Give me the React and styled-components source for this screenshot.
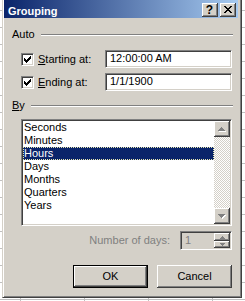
import React from "react";
import styled, { createGlobalStyle } from "styled-components";

const GlobalStyle = createGlobalStyle`
  html, body {
    margin: 0;
    padding: 0;
  }
  body {
    width: 245px;
    height: 301px;
    overflow: hidden;
    background-color: #fff;
    background-image:
      linear-gradient(to right, #c0c0c0 1px, transparent 1px),
      linear-gradient(to bottom, #c0c0c0 1px, transparent 1px);
    background-size: 64px 17px;
    background-position: 20px 10px;
    font-family: "Liberation Sans", Arial, sans-serif;
    font-size: 11px;
  }
  #root {
    display: flow-root;
  }
`;

const FACE = "#d4d0c8";

// classic 3d edges
const raised = `
  box-shadow: inset -1px -1px #404040, inset 1px 1px #fff,
    inset -2px -2px #808080, inset 2px 2px ${FACE};
`;
const sunken = `
  border: 1px solid;
  border-color: #808080 #fff #fff #808080;
  box-shadow: inset 1px 1px #404040, inset -1px -1px ${FACE};
`;

const Window = styled.div`
  margin: -3px 0 0 2px;
  width: 240px;
  height: 301px;
  box-sizing: border-box;
  background: ${FACE};
  border: 1px solid;
  border-color: ${FACE} #404040 #404040 ${FACE};
  box-shadow: inset 1px 1px #fff, inset -1px -1px #808080;
  padding: 2px 3px 2px 1px;
  display: flex;
  flex-direction: column;
`;

const TitleBar = styled.div`
  height: 18px;
  display: flex;
  align-items: flex-start;
  padding: 0 2px 0 4px;
  background: linear-gradient(to right, #0a246a, #a6caf0);
`;

const TitleText = styled.div`
  flex: 1;
  padding-top: 5px;
  line-height: 13px;
  font-weight: bold;
  color: #fff;
`;

const CaptionButtons = styled.div`
  display: flex;
  gap: 2px;
  margin-top: 3px;
`;

const CaptionButton = styled.div`
  width: 16px;
  height: 14px;
  box-sizing: border-box;
  background: ${FACE};
  ${raised}
  display: flex;
  align-items: center;
  justify-content: center;
  font-weight: bold;
  font-size: 12px;
  line-height: 14px;
  color: #000;
  padding: 0 1px 1px 0;
`;

const Body = styled.div`
  flex: 1;
  display: flex;
  flex-direction: column;
  padding: 10px 6px 0 8px;
`;

const GroupHeader = styled.div`
  display: flex;
  align-items: center;
  gap: 6px;
  height: 13px;
  line-height: 13px;
  margin-top: ${(p) => p.$top || 0}px;
`;

const Etched = styled.div`
  flex: 1;
  height: 0;
  border-top: 1px solid #808080;
  border-bottom: 1px solid #fff;
  margin-right: -1px;
`;

const FieldRow = styled.div`
  display: flex;
  align-items: center;
  height: 18px;
  margin: ${(p) => p.$top}px 0 0 9px;
`;

const CheckBox = styled.span`
  width: 13px;
  height: 13px;
  box-sizing: border-box;
  background: #fff;
  ${sunken}
  display: flex;
  align-items: center;
  justify-content: center;
`;

const FieldLabel = styled.span`
  flex: 1;
  margin-left: 4px;
  line-height: 13px;
`;

const TextField = styled.div`
  width: 127px;
  height: 18px;
  box-sizing: border-box;
  background: #fff;
  ${sunken}
  padding-left: 4px;
  line-height: 15px;
`;

const ListBox = styled.div`
  margin: 7px 0 0 9px;
  height: 107px;
  box-sizing: border-box;
  background: #fff;
  ${sunken}
  padding: 1px;
  display: flex;
`;

const ListItems = styled.div`
  flex: 1;
`;

const ListItem = styled.div`
  height: 13px;
  line-height: 13px;
  padding-left: 1px;
  color: ${(p) => (p.$selected ? "#fff" : "#000")};
  background: ${(p) => (p.$selected ? "#0a246a" : "transparent")};
  outline: ${(p) => (p.$selected ? "1px dotted #e8e8b0" : "none")};
  outline-offset: -1px;
`;

const ScrollBar = styled.div`
  width: 16px;
  display: flex;
  flex-direction: column;
  justify-content: space-between;
  background: repeating-conic-gradient(${FACE} 0 25%, #fff 0 50%) 0 0 / 2px 2px;
`;

const ScrollButton = styled.div`
  width: 16px;
  height: 16px;
  box-sizing: border-box;
  background: ${FACE};
  ${raised}
  display: flex;
  align-items: center;
  justify-content: center;
`;

const DaysRow = styled.div`
  display: flex;
  align-items: center;
  justify-content: flex-end;
  margin-top: 5px;
  height: 19px;
`;

const DisabledLabel = styled.span`
  color: #808080;
  line-height: 13px;
  margin-right: 10px;
`;

const Spinner = styled.div`
  width: 52px;
  height: 19px;
  box-sizing: border-box;
  background: ${FACE};
  ${sunken}
  display: flex;
  padding: 1px;
`;

const SpinValue = styled.span`
  flex: 1;
  color: #808080;
  padding-left: 3px;
  line-height: 15px;
`;

const SpinButtons = styled.div`
  width: 16px;
  display: flex;
  flex-direction: column;
`;

const SpinButton = styled.div`
  flex: ${(p) => (p.$top ? 8 : 7)} 0 0;
  box-sizing: border-box;
  background: ${FACE};
  ${raised}
  display: flex;
  align-items: center;
  justify-content: center;
`;

const ButtonRow = styled.div`
  display: flex;
  justify-content: flex-end;
  gap: 9px;
  margin-top: 15px;
`;

const Button = styled.div`
  width: 75px;
  height: 23px;
  box-sizing: border-box;
  background: ${FACE};
  color: #000;
  display: flex;
  align-items: center;
  justify-content: center;
  line-height: 13px;
  box-shadow: ${(p) =>
    p.$default
      ? "inset 0 0 0 1px #000, inset -2px -2px #404040, inset 2px 2px #fff, inset -3px -3px #808080"
      : "inset -1px -1px #404040, inset 1px 1px #fff, inset -2px -2px #808080"};
`;

// tiny bitmap glyphs like the classic 3d controls
function Pixels({ rows, color = "#000", shadow }) {
  const cells = [];
  rows.forEach((r, y) =>
    [...r].forEach((c, x) => {
      if (c === "#") cells.push([x, y]);
    })
  );
  const w = rows[0].length + (shadow ? 1 : 0);
  const h = rows.length + (shadow ? 1 : 0);
  return (
    <svg width={w} height={h} shapeRendering="crispEdges" style={{ display: "block" }}>
      {shadow &&
        cells.map(([x, y]) => (
          <rect key={"s" + x + "_" + y} x={x + 1} y={y + 1} width="1" height="1" fill={shadow} />
        ))}
      {cells.map(([x, y]) => (
        <rect key={x + "_" + y} x={x} y={y} width="1" height="1" fill={color} />
      ))}
    </svg>
  );
}

const CHECK = ["......#", ".....##", "#...###", "##.###.", "#####..", ".###...", "..#...."];
const CLOSE = ["##....##", ".##..##.", "..####..", "...##...", "..####..", ".##..##.", "##....##"];
const UP = ["...#...", "..###..", ".#####.", "#######"];
const DOWN = ["#######", ".#####.", "..###..", "...#..."];
const UP_SMALL = ["..#..", ".###.", "#####"];
const DOWN_SMALL = ["#####", ".###.", "..#.."];

const units = ["Seconds", "Minutes", "Hours", "Days", "Months", "Quarters", "Years"];

export default function App() {
  return (
    <>
      <GlobalStyle />
      <Window>
        <TitleBar>
          <TitleText>Grouping</TitleText>
          <CaptionButtons>
            <CaptionButton>?</CaptionButton>
            <CaptionButton>
              <Pixels rows={CLOSE} />
            </CaptionButton>
          </CaptionButtons>
        </TitleBar>
        <Body>
          <GroupHeader>
            Auto
            <Etched />
          </GroupHeader>
          <FieldRow $top={9}>
            <CheckBox>
              <Pixels rows={CHECK} />
            </CheckBox>
            <FieldLabel>
              <u>S</u>tarting at:
            </FieldLabel>
            <TextField>12:00:00 AM</TextField>
          </FieldRow>
          <FieldRow $top={5}>
            <CheckBox>
              <Pixels rows={CHECK} />
            </CheckBox>
            <FieldLabel>
              <u>E</u>nding at:
            </FieldLabel>
            <TextField>1/1/1900</TextField>
          </FieldRow>
          <GroupHeader $top={8}>
            <span>
              <u>B</u>y
            </span>
            <Etched />
          </GroupHeader>
          <ListBox>
            <ListItems>
              {units.map((u) => (
                <ListItem key={u} $selected={u === "Hours"}>
                  {u}
                </ListItem>
              ))}
            </ListItems>
            <ScrollBar>
              <ScrollButton>
                <Pixels rows={UP} color="#808080" shadow="#fff" />
              </ScrollButton>
              <ScrollButton>
                <Pixels rows={DOWN} color="#808080" shadow="#fff" />
              </ScrollButton>
            </ScrollBar>
          </ListBox>
          <DaysRow>
            <DisabledLabel>Number of days:</DisabledLabel>
            <Spinner>
              <SpinValue>1</SpinValue>
              <SpinButtons>
                <SpinButton $top>
                  <Pixels rows={UP_SMALL} color="#808080" />
                </SpinButton>
                <SpinButton>
                  <Pixels rows={DOWN_SMALL} color="#808080" />
                </SpinButton>
              </SpinButtons>
            </Spinner>
          </DaysRow>
          <ButtonRow>
            <Button $default>OK</Button>
            <Button>Cancel</Button>
          </ButtonRow>
        </Body>
      </Window>
    </>
  );
}
